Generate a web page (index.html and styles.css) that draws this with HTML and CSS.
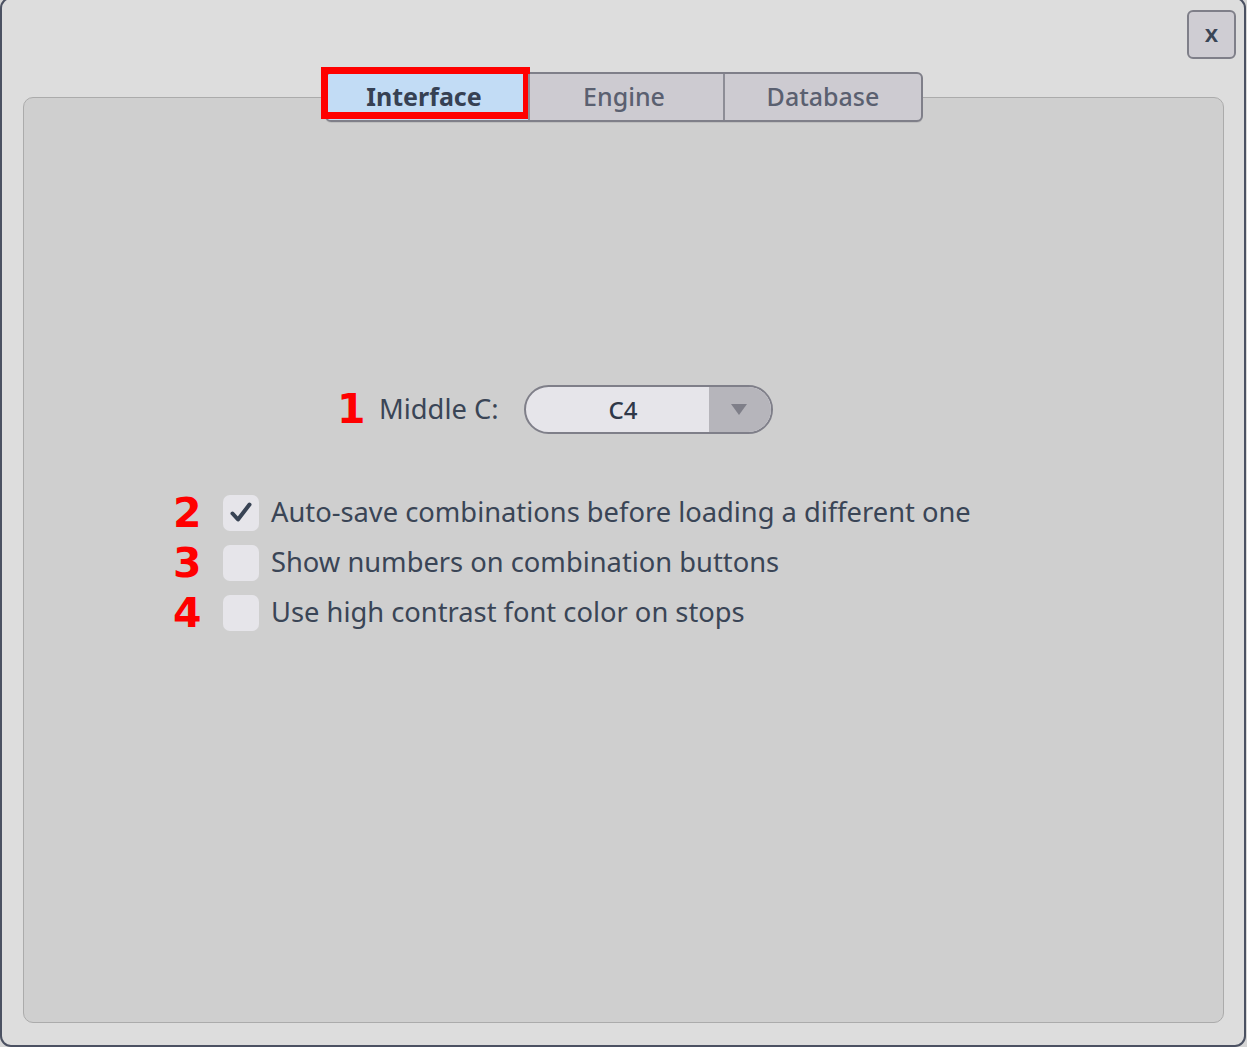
FILE: index.html
```html
<!DOCTYPE html>
<html>
<head>
<meta charset="utf-8">
<link rel="stylesheet" href="styles.css">
</head>
<body>
<div class="dialog">
  <div class="header">
    <button class="close">x</button>
  </div>
  <div class="tabs-wrap">
    <div class="tabs">
      <div class="tab tab-interface active">Interface<span class="mark"></span></div>
      <div class="tab tab-engine">Engine</div>
      <div class="tab tab-database">Database</div>
    </div>
  </div>
  <div class="panel">
    <div class="row-middle">
      <span class="num num-1">1</span>
      <span class="label">Middle C:</span>
      <div class="select">
        <div class="select-value">C4</div>
        <div class="select-arrow"><span class="tri"></span></div>
      </div>
    </div>
    <div class="options">
      <div class="option">
        <span class="num">2</span>
        <span class="check checked">
          <svg width="36" height="36" viewBox="0 0 36 36"><path d="M9.5 18.5 L15 24.5 L26.5 9.5" fill="none" stroke="#384354" stroke-width="4" stroke-linecap="round" stroke-linejoin="round"/></svg>
        </span>
        <span class="opt-text">Auto-save combinations before loading a different one</span>
      </div>
      <div class="option">
        <span class="num">3</span>
        <span class="check"></span>
        <span class="opt-text">Show numbers on combination buttons</span>
      </div>
      <div class="option">
        <span class="num">4</span>
        <span class="check"></span>
        <span class="opt-text">Use high contrast font color on stops</span>
      </div>
    </div>
  </div>
</div>
</body>
</html>
```
FILE: styles.css
```css
html, body {
  margin: 0;
  padding: 0;
}
body {
  background: #d6d6d6;
  font-family: "Noto Sans", "Open Sans", sans-serif;
  color: #3a4556;
  overflow: hidden;
}
.dialog {
  box-sizing: border-box;
  width: 1246px;
  height: 1050px;
  margin-top: -3px;
  border: 2px solid #4b5162;
  border-radius: 11px;
  background: #dddddd;
  display: flex;
  flex-direction: column;
}
.header {
  display: flex;
  justify-content: flex-end;
  padding: 11px 8px 0 0;
}
.close {
  box-sizing: border-box;
  width: 49px;
  height: 49px;
  border: 2px solid #7f7f89;
  border-radius: 6px;
  background: #cfcdd3;
  color: #3a4556;
  font-family: "Noto Sans", sans-serif;
  font-weight: 600;
  font-size: 24px;
  line-height: 40px;
  padding: 0 0 4px 0;
  margin: 0;
}
.tabs-wrap {
  display: flex;
  justify-content: center;
  margin-top: 13px;
  padding-left: 2px;
  position: relative;
  z-index: 1;
  height: 50px;
}
.tabs {
  display: flex;
  box-sizing: border-box;
  height: 50px;
  border: 2px solid #7f7f89;
  border-radius: 6px;
  background: #cdcbd1;
  box-shadow: 0 1px 0 rgba(0,0,0,0.08);
}
.tab {
  display: flex;
  align-items: center;
  justify-content: center;
  font-size: 25px;
  font-weight: 500;
  color: #5a6070;
  height: 46px;
  padding-bottom: 2px;
  box-sizing: border-box;
  position: relative;
}
.tab + .tab {
  border-left: 2px solid #8d8d96;
}
.tab-interface {
  width: 201px;
  background: #c2dcf5;
  color: #364153;
  font-weight: 700;
  border-radius: 4px 0 0 4px;
  padding-right: 7px;
}
.tab-engine { width: 195px; padding-right: 5px; }
.tab-database { width: 198px; }
.mark {
  position: absolute;
  left: -6px;
  top: -7px;
  right: -2px;
  bottom: 1px;
  border: 7px solid #ff0000;
}
.panel {
  box-sizing: border-box;
  margin: -25px 0 0 21px;
  width: 1201px;
  height: 926px;
  border: 1px solid #ababab;
  border-radius: 10px;
  background: #cfcfcf;
  padding-top: 287px;
}
.row-middle {
  display: flex;
  align-items: center;
  height: 49px;
  padding-left: 315px;
}
.num {
  font-family: "DejaVu Sans", sans-serif;
  font-weight: 800;
  font-size: 41px;
  color: #ff0000;
  line-height: 1;
}
.num-1 {
  width: 40px;
  margin-left: -2px;
  margin-right: 2px;
}
.label {
  font-size: 27.3px;
  margin-right: 26px;
  padding-bottom: 2px;
}
.select {
  box-sizing: border-box;
  display: flex;
  width: 249px;
  height: 49px;
  border: 2px solid #7f7f89;
  border-radius: 25px;
  overflow: hidden;
  background: #e6e5ea;
}
.select-value {
  flex: 1;
  display: flex;
  align-items: center;
  justify-content: center;
  padding-left: 10px;
  font-size: 24px;
  font-weight: 500;
  color: #2f3848;
}
.select-arrow {
  width: 60px;
  background: #b6b5bb;
  display: flex;
  align-items: center;
  justify-content: center;
  padding-right: 2px;
}
.tri {
  width: 0;
  height: 0;
  border-left: 8px solid transparent;
  border-right: 8px solid transparent;
  border-top: 11px solid #7f7f89;
}
.options {
  margin-top: 61px;
  padding-left: 149px;
  display: flex;
  flex-direction: column;
  gap: 14px;
}
.option {
  display: flex;
  align-items: center;
  height: 36px;
}
.option .num {
  width: 50px;
}
.check {
  box-sizing: border-box;
  width: 36px;
  height: 36px;
  border-radius: 7px;
  background: #e6e5ea;
  display: block;
  margin-right: 12px;
}
.check svg {
  display: block;
}
.opt-text {
  font-size: 27.3px;
  white-space: nowrap;
  padding-bottom: 3px;
}
```
